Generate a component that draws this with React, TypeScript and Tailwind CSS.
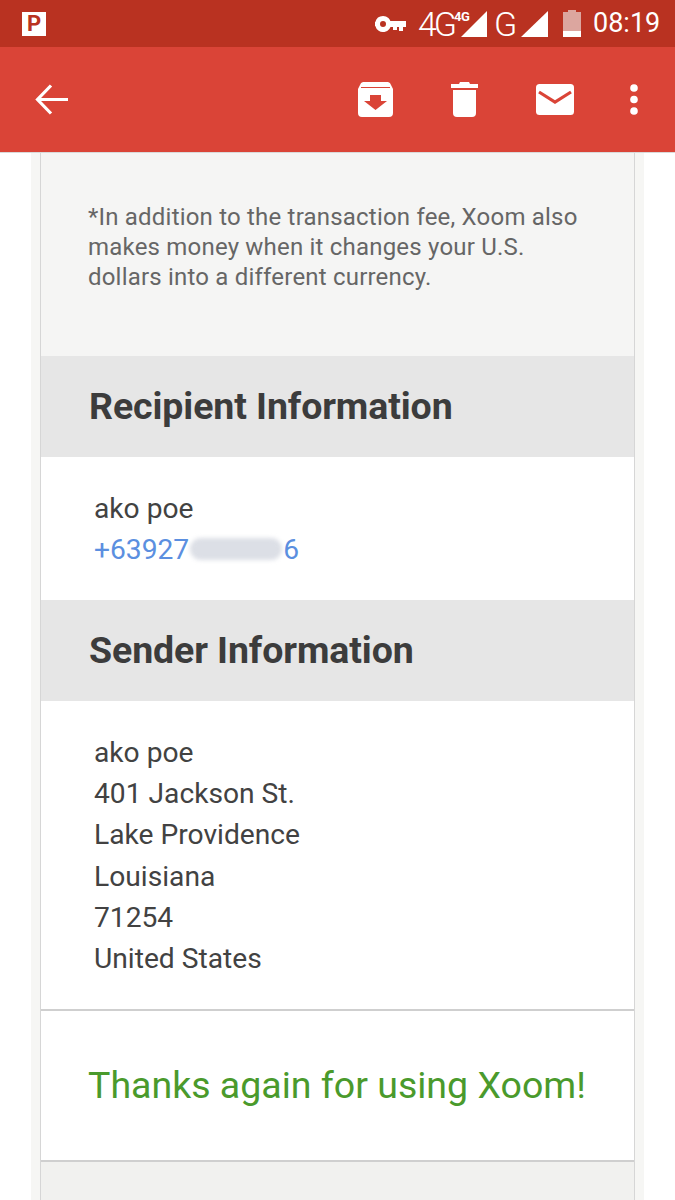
const FONT = "font-['Roboto','Noto_Sans',sans-serif]";

function StatusBar() {
  return (
    <div className="flex h-[47px] items-center bg-[#b93221] text-white">
      <div className="ml-[22px] flex h-6 w-6 items-center justify-center bg-white text-[22px] leading-none font-bold text-[#b93221]">
        P
      </div>
      <svg className="ml-[329px] h-[16px] w-[31px]" viewBox="0 0 31 16" fill="white">
        <path d="M8 0a8 8 0 1 1-7.700 10H0V6h.3A8 8 0 0 1 8 0Zm0 5a3 3 0 1 0 0 6 3 3 0 0 0 0-6Z" fillRule="evenodd" />
        <path d="M14 5h17v6h-3v4h-4v-4h-2v3h-4v-3h-4Z" />
      </svg>
      <span className="ml-[12px] w-[36px] text-[34px] leading-none font-light tracking-[-3px]">4G</span>
      <div className="relative h-[26px] w-[34px]">
        <span className="absolute top-[-1px] left-0 text-[13px] leading-none font-bold tracking-[-0.5px]">4G</span>
        <svg className="absolute top-0 left-[7px] h-[26px] w-[26px]" viewBox="0 0 26 26" fill="white">
          <path d="M26 0v26H0Z" />
        </svg>
      </div>
      <span className="ml-[6px] w-[22px] text-[34px] leading-none font-light">G</span>
      <svg className="ml-[5px] h-[26px] w-[27px]" viewBox="0 0 27 26" fill="white">
        <path d="M27 0v26H0Z" />
      </svg>
      <svg className="ml-[15px] h-[27px] w-[18px]" viewBox="0 0 18 27">
        <path d="M5 0h8v2h5v25H0V2h5Z" fill="#dca69f" />
        <path d="M0 21h18v6H0Z" fill="white" />
      </svg>
      <span className="ml-[12px] text-[27px] leading-none">08:19</span>
    </div>
  );
}

function Toolbar() {
  return (
    <div className="flex h-[106px] items-center border-b border-[#d9d9d9] bg-[#da4437]">
      <svg className="ml-[35px] h-[31px] w-[33px]" viewBox="0 0 33 31" fill="none" stroke="white" strokeWidth="3.2">
        <path d="M33 15.500H3M16 1.500 2.500 15.500 16 29.500" />
      </svg>
      <svg className="ml-[290px] h-[35px] w-[35px]" viewBox="0 0 35 35">
        <path
          d="M5 0h25a4 4 0 0 1 3 3l2 4v24a4 4 0 0 1-4 4H4a4 4 0 0 1-4-4V7l2-4a4 4 0 0 1 3-3Z"
          fill="white"
        />
        <path d="M3 5.500h29" stroke="#da4437" strokeWidth="1" />
        <path d="M12 13h11v6h6L17.500 28 6 19h6Z" fill="#da4437" />
      </svg>
      <svg className="ml-[58px] h-[35px] w-[27px]" viewBox="0 0 27 35" fill="white">
        <path d="M9 0h9l1 2h8v4H0V2h8Z" />
        <path d="M2 8h23v23a4 4 0 0 1-4 4H6a4 4 0 0 1-4-4Z" />
      </svg>
      <svg className="ml-[58px] h-[31px] w-[38px]" viewBox="0 0 38 31">
        <rect width="38" height="31" rx="3.500" fill="white" />
        <path d="M3 8 19 18 35 8" fill="none" stroke="#da4437" strokeWidth="3.200" />
      </svg>
      <svg className="ml-[56px] h-[31px] w-[8px]" viewBox="0 0 8 31" fill="white">
        <circle cx="4" cy="4" r="3.800" />
        <circle cx="4" cy="15.500" r="3.800" />
        <circle cx="4" cy="27" r="3.800" />
      </svg>
    </div>
  );
}

function SectionHeading({ children }: { children: string }) {
  return (
    <div className="flex h-[101px] items-center bg-[#e6e6e6] pl-[48px] text-[37.500px] leading-none font-bold tracking-[-0.1px] text-[#3c3c3c]">
      {children}
    </div>
  );
}

export default function App() {
  return (
    <div className={`${FONT} h-[1200px] w-[675px] overflow-hidden bg-white`}>
      <StatusBar />
      <Toolbar />
      <div className="mx-[31px] border-x-[9px] border-[#f6f6f4]">
        <div className="border-x border-[#d6d6d6]">
          <div className="h-[203px] bg-[#f5f5f4] pt-[49px] pl-[47px] text-[24px] leading-[30px] tracking-[0.2px] text-[#666666]">
            <p>*In addition to the transaction fee, Xoom also</p>
            <p>makes money when it changes your U.S.</p>
            <p>dollars into a different currency.</p>
          </div>
          <SectionHeading>Recipient Information</SectionHeading>
          <div className="h-[143px] pt-[31px] pl-[53px] text-[28.200px] leading-[41.200px] text-[#424242]">
            <p>ako poe</p>
            <p className="relative text-[#5b8fe0]">
              +63927<span className="inline-block w-[94px]" />6
              <span className="absolute top-[9px] left-[96px] h-[22px] w-[92px] rounded-full bg-[#dcdfe6] blur-[2px]" />
            </p>
          </div>
          <SectionHeading>Sender Information</SectionHeading>
          <div className="h-[310px] border-b-2 border-[#cfcfcf] pt-[31px] pl-[53px] text-[28.200px] leading-[41.200px] text-[#424242]">
            <p>ako poe</p>
            <p>401 Jackson St.</p>
            <p>Lake Providence</p>
            <p>Louisiana</p>
            <p>71254</p>
            <p>United States</p>
          </div>
          <div className="flex h-[151px] items-center border-b-2 border-[#cfcfcf] pl-[47px] text-[37.500px] leading-none text-[#4a9a2c]">
            Thanks again for using Xoom!
          </div>
          <div className="h-[60px] bg-[#f1f1ef]" />
        </div>
      </div>
    </div>
  );
}
